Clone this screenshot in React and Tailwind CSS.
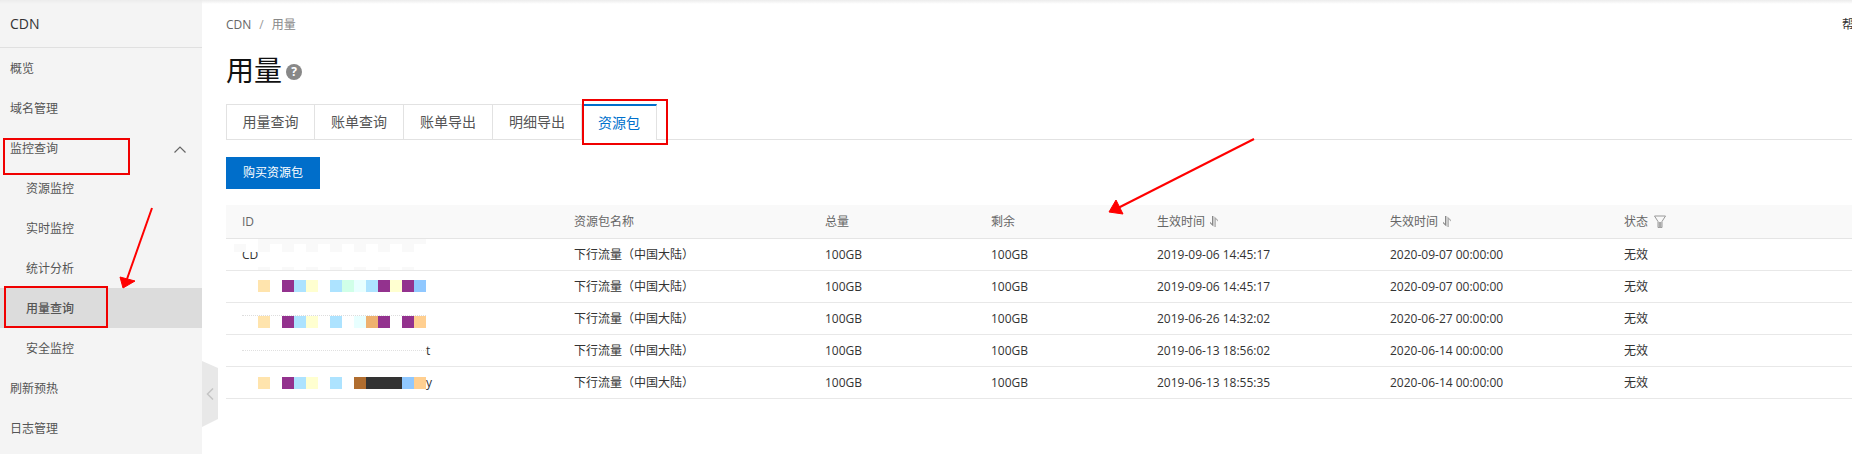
const nav = [
  { label: '概览' },
  { label: '域名管理' },
  { label: '监控查询', open: true },
  { label: '资源监控', sub: true },
  { label: '实时监控', sub: true },
  { label: '统计分析', sub: true },
  { label: '用量查询', sub: true, active: true },
  { label: '安全监控', sub: true },
  { label: '刷新预热' },
  { label: '日志管理' },
]

const tabs = ['用量查询', '账单查询', '账单导出', '明细导出']

const Y = '#ffe4ad'
const P = '#93328e'
const B = '#ade3ff'
const L = '#ffffd0'
const rows = [
  { id: 'first', start: '2019-09-06 14:45:17', end: '2020-09-07 00:00:00' },
  { id: [Y, null, P, B, L, null, B, '#d0ffe8', '#e8ffff', B, P, L, P, '#90c8ff'], shift: 'mb-0.5', start: '2019-09-06 14:45:17', end: '2020-09-07 00:00:00' },
  { id: [Y, null, P, B, L, null, B, null, '#e8ffff', '#eeb16f', P, null, P, '#ffcf90'], shift: 'mt-1.5 border-t border-dotted border-[#dddddd]', start: '2019-06-26 14:32:02', end: '2020-06-27 00:00:00' },
  { id: 'faint', start: '2019-06-13 18:56:02', end: '2020-06-14 00:00:00' },
  { id: [Y, null, P, B, L, null, B, null, '#b06d2f', '#333333', '#333333', '#333333', '#90c8ff', '#ffcf90'], tail: 'y', start: '2019-06-13 18:55:35', end: '2020-06-14 00:00:00' },
]

const gridCols = 'grid-cols-[332px_251px_166px_166px_233px_234px_1fr]'

function SortIcon() {
  return (
    <svg width="10" height="11" viewBox="0 0 10 11" className="ml-1" fill="#888">
      <path d="M3 0h1.4v10.5L1 7.2V5.8l2 2z" />
      <path d="M5.4 .5L9 4v1.4L6.8 3.2V11H5.4z" fill="#aaa" />
    </svg>
  )
}

function Mosaic({ row }) {
  if (row.id === 'first') {
    return (
      <div className="relative flex h-full items-center pl-4">
        <span>CD</span>
        {/* smudge over the id */}
        <div className="absolute left-2 top-0 flex h-[13px] w-[192px] gap-3 bg-white">
          {Array.from({ length: 8 }).map((_, i) => (
            <span key={i} className={`w-3 bg-[#f9f9f9] ${i === 0 ? 'mt-[5px]' : ''}`} />
          ))}
        </div>
        <div className="absolute left-8 top-0 h-[5px] w-[168px] bg-[#f9f9f9]" />
        <div className="absolute bottom-0 left-8 flex gap-3">
          {Array.from({ length: 7 }).map((_, i) => <span key={i} className="h-[3px] w-3 bg-[#f9f9f9]" />)}
        </div>
      </div>
    )
  }
  if (row.id === 'faint') {
    return (
      <div className="flex items-center pl-4">
        <span className="w-[184px] border-b border-dotted border-[#e0e0e0]" />
        <span>t</span>
      </div>
    )
  }
  return (
    <div className="pl-4">
      <div className={`flex w-fit items-center pl-4 ${row.shift || ''}`}>
        {row.id.map((c, i) => (
          <span key={i} className="size-3" style={{ backgroundColor: c || 'transparent' }} />
        ))}
        {row.tail && <span>{row.tail}</span>}
      </div>
    </div>
  )
}

export default function App() {
  return (
    <div className="relative h-[454px] w-[1852px] overflow-hidden bg-white text-xs text-[#333] font-['Open_Sans','Noto_Sans_CJK_SC',sans-serif]">
      <div className="flex h-full">
        {/* Sidebar */}
        <aside className="w-[202px] shrink-0 bg-[#f4f4f4]">
          <div className="flex h-12 items-center border-b border-[#e0e0e0] pl-2.5 text-sm">CDN</div>
          {nav.map(item => (
            <div
              key={item.label}
              className={`flex h-10 items-center justify-between pr-4 pt-0.5 ${item.sub ? 'pl-[26px]' : 'pl-2.5'} ${item.active ? 'bg-[#dcdcdc] font-medium' : ''}`}
            >
              <span className="text-[#555]">{item.label}</span>
              {item.open && (
                <svg width="12" height="7" viewBox="0 0 12 7" fill="none" stroke="#666" strokeWidth="1.2">
                  <path d="M.5 6.5L6 1l5.5 5.5" />
                </svg>
              )}
            </div>
          ))}
        </aside>

        {/* Main */}
        <main className="min-w-0 flex-1 pl-6">
          <div className="flex h-[50px] items-center justify-between">
            <div className="text-[#666]">
              <span>CDN</span>
              <span className="mx-2 text-[#999]">/</span>
              <span className="text-[#888]">用量</span>
            </div>
            <span className="w-2.5 overflow-hidden whitespace-nowrap">帮助</span>
          </div>

          <div className="flex h-[54px] items-start pt-1.5">
            <h1 className="text-[28px] leading-none text-[#111]">用量</h1>
            <span className="ml-1 mt-2 flex size-4 items-center justify-center rounded-full bg-[#888] text-xs font-bold text-white">?</span>
          </div>

          <div className="flex h-9 border-b border-[#e2e2e2]">
            {tabs.map((tab, i) => (
              <div
                key={tab}
                className={`flex h-9 w-[89px] items-center justify-center border-y border-r border-[#e2e2e2] text-sm text-[#555] ${i === 0 ? 'border-l' : ''}`}
              >
                {tab}
              </div>
            ))}
            <div className="flex h-9 w-[75px] items-center justify-center border-t-2 border-r border-t-[#006eca] border-r-[#e2e2e2] bg-white text-sm text-[#0070cc]">
              资源包
            </div>
          </div>

          <button className="mt-[17px] flex h-8 w-[94px] items-center justify-center bg-[#006eca] text-white">
            购买资源包
          </button>

          {/* Table */}
          <div className="mt-4">
            <div className={`grid h-[34px] ${gridCols} items-center border-b border-[#e5e5e5] bg-[#f9f9f9] text-[#666]`}>
              <div className="pl-4">ID</div>
              <div className="pl-4">资源包名称</div>
              <div className="pl-4">总量</div>
              <div className="pl-4">剩余</div>
              <div className="flex items-center pl-4">生效时间<SortIcon /></div>
              <div className="flex items-center pl-4">失效时间<SortIcon /></div>
              <div className="flex items-center pl-4">
                状态
                <svg width="12" height="13" viewBox="0 0 12 13" fill="none" stroke="#999" className="ml-1.5">
                  <path d="M.5 1h11L8 6.5v6H4v-6z" />
                  <path d="M4.5 7h3v5.5h-3z" fill="#aaa" stroke="none" />
                </svg>
              </div>
            </div>
            {rows.map((row, i) => (
              <div key={i} className={`grid h-8 ${gridCols} items-center border-b border-[#e8e8e8]`}>
                <Mosaic row={row} />
                <div className="pl-4">下行流量（中国大陆）</div>
                <div className="pl-4">100GB</div>
                <div className="pl-4">100GB</div>
                <div className="pl-4">{row.start}</div>
                <div className="pl-4">{row.end}</div>
                <div className="pl-4">无效</div>
              </div>
            ))}
          </div>
        </main>
      </div>

      {/* Sidebar collapse handle */}
      <div className="absolute left-[202px] top-[361px] flex h-[66px] w-4 items-center justify-center bg-[#e8e8e8] [clip-path:polygon(0_0,100%_7px,100%_58px,0_100%)]">
        <svg width="8" height="12" viewBox="0 0 8 12" fill="none" stroke="#c4c4c4" strokeWidth="1.5">
          <path d="M7 .5L1.5 6 7 11.5" />
        </svg>
      </div>

      {/* Red annotations drawn over the page */}
      <div className="absolute left-[3px] top-[138px] h-[37px] w-[127px] border-2 border-[#f00000]" />
      <div className="absolute left-1 top-[286px] h-[42px] w-[104px] border-2 border-[#f00000]" />
      <div className="absolute left-[582px] top-[99px] h-[46px] w-[86px] border-2 border-[#f00000]" />
      <svg className="pointer-events-none absolute left-0 top-0" width="1852" height="454" fill="#ff0000" stroke="#ff0000">
        <path d="M152 208L127 279" strokeWidth="2" fill="none" />
        <path d="M123 288L120 277L135 281z" />
        <path d="M1254 139L1118 208" strokeWidth="2" fill="none" />
        <path d="M1109 212L1116 200L1123 214z" />
      </svg>
      <div className="absolute left-0 top-0 h-1 w-full bg-gradient-to-b from-[#ececec] to-transparent" />
    </div>
  )
}
